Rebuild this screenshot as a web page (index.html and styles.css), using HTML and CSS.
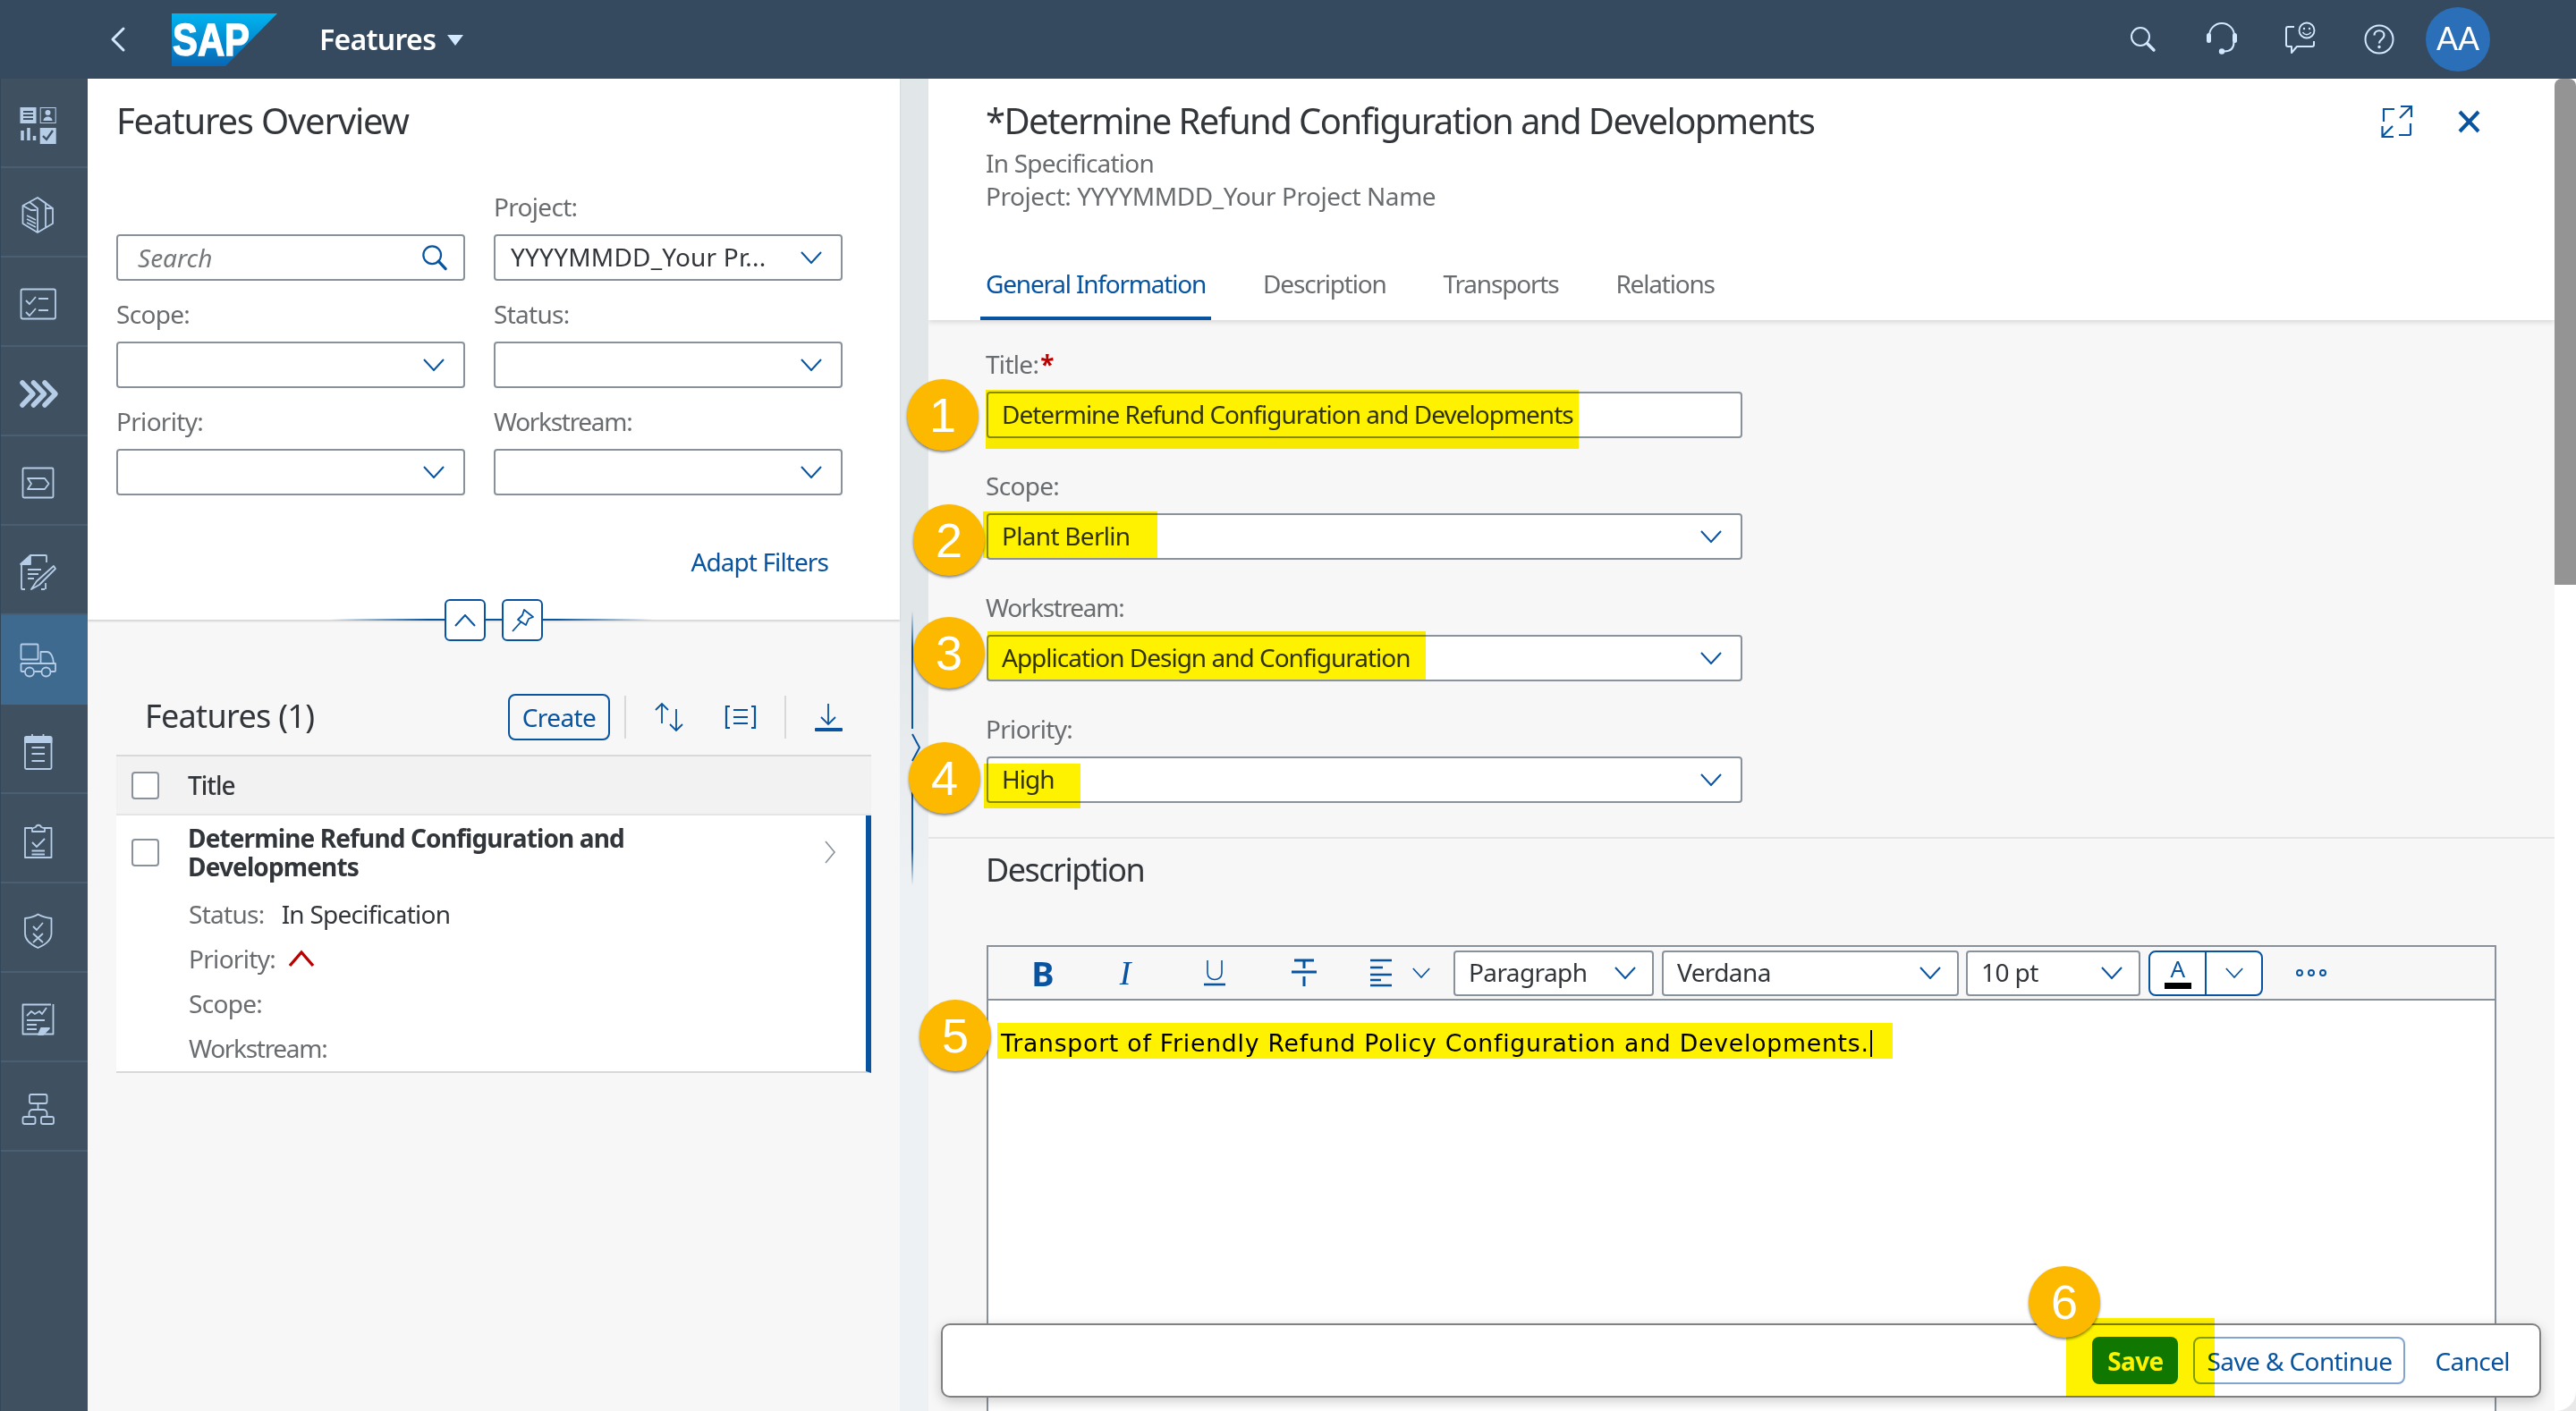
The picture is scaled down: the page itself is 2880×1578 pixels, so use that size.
FILE: index.html
```html
<!DOCTYPE html>
<html lang="en">
<head>
	<meta charset="UTF-8">
	<title>Features</title>
	<link rel="stylesheet" href="styles.css">
</head>
<body>
<svg class="defs">
	<symbol id="i-chev" viewBox="0 0 24 14"><path d="M1 1l11 12L23 1" fill="none" stroke="currentColor" stroke-width="2"/></symbol>
	<symbol id="i-search" viewBox="0 0 32 32"><circle cx="13" cy="13" r="10.5" fill="none" stroke="currentColor" stroke-width="2.4"/><path d="M20.5 20.5L29 29.5" fill="none" stroke="currentColor" stroke-width="3.4" stroke-linecap="round"/></symbol>
</svg>

<header class="shell">
	<svg class="shell-back" width="20" height="30" viewBox="0 0 20 30"><path d="M16 3L4 15l12 12" fill="none" stroke="currentColor" stroke-width="3" stroke-linecap="round" stroke-linejoin="round"/></svg>
	<svg class="shell-logo" width="118" height="59" viewBox="0 0 118 59">
		<defs><linearGradient id="sapfill" x1="0" y1="0" x2="0" y2="1"><stop offset="0" stop-color="#00b4f0"/><stop offset="1" stop-color="#0a67b4"/></linearGradient></defs>
		<polygon points="0,0 118,0 60,59 0,59" fill="url(#sapfill)"/>
		<text x="1" y="47" class="sap-text" textLength="86" lengthAdjust="spacingAndGlyphs">SAP</text>
	</svg>
	<span class="shell-title">Features</span>
	<svg class="shell-caret" width="18" height="12" viewBox="0 0 18 12"><polygon points="0,0 18,0 9,12" fill="currentColor"/></svg>
	<div class="shell-actions">
		<svg class="shell-icon" width="40" height="40" viewBox="0 0 40 40"><circle cx="17" cy="17" r="10" fill="none" stroke="currentColor" stroke-width="2"/><path d="M24.500 24.500L32 32" stroke="currentColor" stroke-width="3.400" stroke-linecap="round"/></svg>
		<svg class="shell-icon" width="40" height="40" viewBox="0 0 40 40"><path d="M6 20v-4a14 14 0 0 1 28 0v4M33.500 23c0 7-4 10.500-11 10.500" fill="none" stroke="currentColor" stroke-width="2"/><rect x="3" y="13" width="5" height="11" rx="2.500" fill="currentColor"/><rect x="32" y="13" width="5" height="11" rx="2.500" fill="currentColor"/><circle cx="20" cy="33.500" r="3.200" fill="currentColor"/></svg>
		<svg class="shell-icon" width="40" height="40" viewBox="0 0 40 40"><path d="M13 6H6a2 2 0 0 0-2 2v18a2 2 0 0 0 2 2h4v7l6-7h17a2 2 0 0 0 2-2v-4" fill="none" stroke="currentColor" stroke-width="2" stroke-linejoin="round"/><circle cx="27" cy="10" r="8.500" fill="none" stroke="currentColor" stroke-width="1.800"/><circle cx="24" cy="8" r="1.200" fill="currentColor"/><circle cx="30" cy="8" r="1.200" fill="currentColor"/><path d="M22.500 12c2 3.500 7 3.500 9 0" fill="none" stroke="currentColor" stroke-width="1.500"/></svg>
		<svg class="shell-icon" width="40" height="40" viewBox="0 0 40 40"><circle cx="20" cy="20" r="15.500" fill="none" stroke="currentColor" stroke-width="2"/><path d="M14.500 15.500c0-7 11-7 11 0 0 4.500-5.500 4.500-5.500 9" fill="none" stroke="currentColor" stroke-width="2.200"/><circle cx="20" cy="28.500" r="1.700" fill="currentColor"/></svg>
		<span class="avatar">AA</span>
	</div>
</header>

<div class="app">
	<nav class="nav">
		<div class="nav-item"><svg width="80" height="100" viewBox="0 0 80 100">
			<rect x="12.500" y="32" width="18" height="18" fill="currentColor"/><path d="M16 37h11M16 41h11M16 45h11" stroke="#3f5161" stroke-width="2"/>
			<rect x="35.200" y="32.500" width="17" height="17" fill="none" stroke="currentColor" stroke-width="1"/><circle cx="43.500" cy="38" r="3" fill="currentColor"/><path d="M38.500 47c0-6 10-6 10 0z" fill="currentColor"/>
			<path d="M15 69V58M22 69V55M28.500 69v-5" stroke="currentColor" stroke-width="3.500"/>
			<rect x="34.700" y="55" width="18" height="18" fill="currentColor"/><path d="M38 64l4 4 7-10" fill="none" stroke="#3f5161" stroke-width="2.400"/>
		</svg></div>
		<div class="nav-item"><svg width="80" height="100" viewBox="0 0 80 100">
			<g class="nav-line"><path d="M15.500 42L32 33l17 12v17l-17 10-16.500-10zM23 38l9 7v27M32 33l9 6v6l8 0M41 45v21"/><path d="M20 53l10 5M20 57l10 5M20 61l10 5" stroke-width="1.500"/><path d="M15.500 42l9 5 6 0"/></g>
		</svg></div>
		<div class="nav-item"><svg width="80" height="100" viewBox="0 0 80 100">
			<g class="nav-line"><rect x="13.500" y="35.500" width="38.500" height="33" rx="2"/><path d="M19 48l4 4 7-8M19 61l4 4 7-8M33 46h11M33 59h11"/></g>
		</svg></div>
		<div class="nav-item"><svg width="80" height="100" viewBox="0 0 80 100">
			<path class="nav-thick" d="M15 40l12 12.500L15 65M27.500 40l12 12.500-12 12.500M40 40l12 12.500L40 65"/>
		</svg></div>
		<div class="nav-item"><svg width="80" height="100" viewBox="0 0 80 100">
			<g class="nav-line"><rect x="15.500" y="35.500" width="34" height="33" rx="1.500"/><path d="M21 47h19l4.500 6-4.500 6H21l4-6z"/></g>
		</svg></div>
		<div class="nav-item"><svg width="80" height="100" viewBox="0 0 80 100">
			<g class="nav-line"><path d="M24 33h17a1 1 0 0 1 1 1v7M14 44v26a1 1 0 0 0 1 1h3M36 71h4M41 64v7"/><path d="M24 33L13 43h11z" fill="currentColor"/><path d="M21 49h15M21 54h12M21 59h7"/><path d="M31 62l19-17 2 3-18 18-9 5z"/></g>
		</svg></div>
		<div class="nav-item is-active"><svg width="80" height="100" viewBox="0 0 80 100">
			<g class="nav-line"><rect x="13.500" y="32.500" width="19" height="17" rx="1"/><path d="M35.500 54V41h7c4 0 7 5 7.500 13M13.500 54h38.500v8a1 1 0 0 1-1 1h-4M36 63H28.500M17.500 63h-3a1 1 0 0 1-1-1v-8"/><circle cx="23" cy="63.500" r="5"/><circle cx="41.500" cy="63.500" r="5"/></g>
		</svg></div>
		<div class="nav-item"><svg width="80" height="100" viewBox="0 0 80 100">
			<g class="nav-line"><rect x="18" y="36" width="29.500" height="36" rx="1.500"/><path d="M18 37h29.500v5H18z" fill="currentColor"/><path d="M26 33v7M38.500 33v7M25.500 48h14.500M25.500 55h14.500M25.500 63h14.500"/></g>
		</svg></div>
		<div class="nav-item"><svg width="80" height="100" viewBox="0 0 80 100">
			<g class="nav-line"><path d="M26 38h-8v33h29.500V38H39"/><path d="M26 42v-3.500l4-1.500c1-3 5-3 6 0l4 1.500V42z"/><path d="M26 54l5 5 9-9M25.500 63.500h14.500M25.500 67.500h14.500"/></g>
		</svg></div>
		<div class="nav-item"><svg width="80" height="100" viewBox="0 0 80 100">
			<g class="nav-line"><path d="M32.500 34.500c5 3 10 4 15 4.500v17c0 8-8 13-15 16-7-3-14.500-8-14.500-16V39c5-.5 10-1.500 14.500-4.500z"/><path d="M27 48l4 4 7-8M27 56l11 10M38 56L27 66"/></g>
		</svg></div>
		<div class="nav-item"><svg width="80" height="100" viewBox="0 0 80 100">
			<g class="nav-line"><path d="M47 35.500H15.500v33h34V35"/><path d="M20 48l5-5 4 3 5-3 3 3 5-7M20 53h20M20 58h11M20 63h11"/><path d="M33 69l3-7h9l-7 7z" fill="currentColor"/></g>
		</svg></div>
		<div class="nav-item"><svg width="80" height="100" viewBox="0 0 80 100">
			<g class="nav-line"><rect x="23" y="36" width="19.500" height="10" rx="2"/><rect x="15.500" y="61" width="14" height="8" rx="2"/><rect x="36" y="61" width="14" height="8" rx="2"/><path d="M32.500 46v7M22.500 61v-4a4 4 0 0 1 4-4h12a4 4 0 0 1 4 4v4"/></g>
		</svg></div>
	</nav>

	<section class="master">
		<div class="filters">
			<h1 class="filters-title">Features Overview</h1>
			<div class="filter-grid">
				<div class="filter">
					<div class="box box-search"><span class="placeholder">Search</span><svg class="box-icon" width="30" height="30"><use href="#i-search"/></svg></div>
				</div>
				<div class="filter">
					<label class="label">Project:</label>
					<div class="box"><span class="box-text box-text-project">YYYYMMDD_Your Pr...</span><svg class="box-icon" width="24" height="14"><use href="#i-chev"/></svg></div>
				</div>
				<div class="filter">
					<label class="label">Scope:</label>
					<div class="box"><svg class="box-icon" width="24" height="14"><use href="#i-chev"/></svg></div>
				</div>
				<div class="filter">
					<label class="label">Status:</label>
					<div class="box"><svg class="box-icon" width="24" height="14"><use href="#i-chev"/></svg></div>
				</div>
				<div class="filter">
					<label class="label">Priority:</label>
					<div class="box"><svg class="box-icon" width="24" height="14"><use href="#i-chev"/></svg></div>
				</div>
				<div class="filter">
					<label class="label label-wide">Workstream:</label>
					<div class="box"><svg class="box-icon" width="24" height="14"><use href="#i-chev"/></svg></div>
				</div>
			</div>
			<a class="adapt">Adapt Filters</a>
			<div class="collapse-line"></div>
			<div class="collapse-btns">
				<span class="collapse-btn"><svg width="24" height="14" class="flip"><use href="#i-chev"/></svg></span>
				<span class="collapse-btn"><svg width="26" height="26" viewBox="0 0 26 26"><path d="M15 1l10 8-5 2-3 7-9-6 5-5zM11 15L2 25" fill="none" stroke="currentColor" stroke-width="1.800" stroke-linejoin="round"/></svg></span>
			</div>
		</div>

		<div class="list">
			<div class="list-bar">
				<h2 class="list-title">Features (1)</h2>
				<button class="btn list-create">Create</button>
				<span class="tool-sep"></span>
				<svg class="tool" width="48" height="48" viewBox="0 0 48 48"><path d="M16 31V9M9 16l7-7 7 7M32 15v24M25 32l7 7 7-7" fill="none" stroke="currentColor" stroke-width="1.800"/></svg>
				<svg class="tool tool-gap" width="48" height="48" viewBox="0 0 48 48"><path d="M12 12H8v24h4M36 12h4v24h-4M16 16h16M16 24h16M16 31h16" fill="none" stroke="currentColor" stroke-width="2.200"/></svg>
				<span class="tool-sep tool-sep-b"></span>
				<svg class="tool" width="48" height="48" viewBox="0 0 48 48"><path d="M24 9v23M16 24l8 8 8-8" fill="none" stroke="currentColor" stroke-width="1.800"/><rect x="9" y="36" width="31" height="4" rx="1" fill="currentColor"/></svg>
			</div>
			<div class="list-head">
				<span class="check"></span>
				<span class="list-col">Title</span>
			</div>
			<div class="list-row">
				<span class="check check-row"></span>
				<div class="row-body">
					<div class="row-title">Determine Refund Configuration and<br>Developments</div>
					<div class="row-meta"><span class="label">Status:</span><span class="row-val">In Specification</span></div>
					<div class="row-meta"><span class="label">Priority:</span><svg class="row-prio" width="30" height="20" viewBox="0 0 30 20"><path d="M2 18L15 3l13 15" fill="none" stroke="#bb0000" stroke-width="3.400"/></svg></div>
					<div class="row-meta"><span class="label">Scope:</span></div>
					<div class="row-meta"><span class="label label-wide">Workstream:</span></div>
				</div>
				<svg class="row-nav" width="14" height="28" viewBox="0 0 14 28"><path d="M2 2l10 12L2 26" fill="none" stroke="#89919a" stroke-width="1.600"/></svg>
			</div>
		</div>
	</section>

	<div class="gutter">
		<span class="gutter-line"></span>
		<svg class="gutter-chev" width="12" height="32" viewBox="0 0 12 32"><path d="M2 1l8 15L2 31" fill="none" stroke="currentColor" stroke-width="2"/></svg>
		<span class="gutter-line gutter-line-b"></span>
	</div>

	<main class="detail">
		<div class="detail-head">
			<div class="detail-top">
				<div>
					<h1 class="detail-title">*Determine Refund Configuration and Developments</h1>
					<div class="detail-sub">In Specification</div>
					<div class="detail-sub detail-sub-project">Project: YYYYMMDD_Your Project Name</div>
				</div>
				<div class="detail-actions">
					<svg width="40" height="40" viewBox="0 0 40 40"><path d="M17 6H5v14M35 22v12a1 1 0 0 1-1 1H22M24 3h12v12M35.500 3.500L23 16M16 37H3.500V25M3.500 36.500L15 25" fill="none" stroke="currentColor" stroke-width="2.200"/></svg>
					<svg width="40" height="40" viewBox="0 0 40 40"><path d="M10 9l21 22M31 9L10 31" fill="none" stroke="currentColor" stroke-width="4"/></svg>
				</div>
			</div>
			<div class="tabs">
				<a class="tab is-on">General Information</a>
				<a class="tab">Description</a>
				<a class="tab">Transports</a>
				<a class="tab">Relations</a>
			</div>
		</div>

		<div class="detail-body">
			<form class="form">
				<div class="form-row">
					<label class="label">Title:<span class="req">*</span></label>
					<div class="box"><span class="box-text">Determine Refund Configuration and Developments</span></div>
				</div>
				<div class="form-row">
					<label class="label">Scope:</label>
					<div class="box"><span class="box-text box-text-short">Plant Berlin</span><svg class="box-icon" width="24" height="14"><use href="#i-chev"/></svg></div>
				</div>
				<div class="form-row">
					<label class="label label-wide">Workstream:</label>
					<div class="box"><span class="box-text">Application Design and Configuration</span><svg class="box-icon" width="24" height="14"><use href="#i-chev"/></svg></div>
				</div>
				<div class="form-row">
					<label class="label">Priority:</label>
					<div class="box"><span class="box-text">High</span><svg class="box-icon" width="24" height="14"><use href="#i-chev"/></svg></div>
				</div>
			</form>
			<div class="section-rule"></div>
			<h2 class="section-title">Description</h2>
			<div class="editor">
				<div class="editor-bar">
					<span class="tb tb-bold">B</span>
					<span class="tb tb-italic">I</span>
					<span class="tb tb-under"><svg width="26" height="30" viewBox="0 0 26 30"><path d="M5 1v14c0 10 16 10 16 0V1" fill="none" stroke="currentColor" stroke-width="1.600"/><path d="M1 28h24" stroke="currentColor" stroke-width="2.600"/></svg></span>
					<span class="tb tb-strike"><svg width="30" height="32" viewBox="0 0 30 32"><path d="M4 2h22M15 2v9M1 15h28M15 20v11" fill="none" stroke="currentColor" stroke-width="3"/></svg></span>
					<span class="tb tb-align"><svg width="26" height="32" viewBox="0 0 26 32"><path d="M1 2h24M1 10h14M1 18h24M1 24h12M1 30h24" fill="none" stroke="currentColor" stroke-width="2.600"/></svg></span>
					<svg class="tb-caret" width="20" height="12"><use href="#i-chev"/></svg>
					<div class="tb-select tb-para"><span class="box-text-tb">Paragraph</span><svg width="24" height="14"><use href="#i-chev"/></svg></div>
					<div class="tb-select tb-font"><span class="box-text-tb">Verdana</span><svg width="24" height="14"><use href="#i-chev"/></svg></div>
					<div class="tb-select tb-size"><span class="box-text-tb">10 pt</span><svg width="24" height="14"><use href="#i-chev"/></svg></div>
					<div class="tb-color">
						<span class="tb-color-a"><span class="tb-a">A</span><span class="tb-a-bar"></span></span>
						<span class="tb-color-b"><svg width="20" height="12"><use href="#i-chev"/></svg></span>
					</div>
					<svg class="tb-more" width="40" height="12" viewBox="0 0 40 12"><circle cx="7" cy="6" r="3" fill="none" stroke="currentColor" stroke-width="2"/><circle cx="20" cy="6" r="3" fill="none" stroke="currentColor" stroke-width="2"/><circle cx="33" cy="6" r="3" fill="none" stroke="currentColor" stroke-width="2"/></svg>
				</div>
				<div class="editor-text">Transport of Friendly Refund Policy Configuration and Developments.<span class="caret"></span></div>
			</div>
		</div>

		<div class="footer">
			<button class="btn btn-save">Save</button>
			<button class="btn btn-next">Save &amp; Continue</button>
			<a class="footer-cancel">Cancel</a>
		</div>
	</main>

	<div class="scroll"><div class="scroll-thumb"></div></div>
</div>

<!-- yellow marks and numbers put on top of the screenshot -->
<div class="mark mark-1"></div>
<div class="mark mark-2"></div>
<div class="mark mark-3"></div>
<div class="mark mark-4"></div>
<div class="mark mark-5"></div>
<div class="mark mark-6"></div>
<div class="step step-1">1</div>
<div class="step step-2">2</div>
<div class="step step-3">3</div>
<div class="step step-4">4</div>
<div class="step step-5">5</div>
<div class="step step-6">6</div>
</body>
</html>
```

FILE: styles.css
```css
* { box-sizing: border-box; }
body,h1,h2,form,button { margin:0; padding:0; }
html, body { height: 1578px; overflow: hidden; }
body { position: relative; background: #e9e9e9; color: #32363a; font-family: "Noto Sans", "Open Sans", sans-serif; font-size: 28px; line-height: 36px; letter-spacing: -.6px; }
h1, h2 { font-weight: normal; }
button { font: inherit; letter-spacing: inherit; }
.defs { position: absolute; width: 0; height: 0; }

/* shell bar */
.shell { display: flex; align-items: center; height: 88px; background: #354a5f; color: #d1e8ff; }
.shell-back { margin-left: 122px; }
.shell-logo { margin-left: 50px; }
.sap-text { font-family: "Liberation Sans", sans-serif; font-weight: bold; font-size: 50px; fill: #fff; stroke: #fff; stroke-width: 1.500px; letter-spacing: 0; }
.shell-title { margin-left: 47px; color: #fff; font-weight: 600; font-size: 32px; letter-spacing: -.7px; }
.shell-caret { margin-left: 13px; margin-top: 1px; }
.shell-actions { display: flex; align-items: center; margin-left: auto; margin-right: 96px; }
.shell-icon { margin-right: 48px; }
.avatar { width: 72px; height: 72px; margin-left: -16px; border-radius: 50%; background: #2a6fb8; color: #fff; font-family: "Liberation Sans", sans-serif; font-size: 36px; line-height: 72px; text-align: center; letter-spacing: 0; }

.app { display: flex; height: 1490px; }

/* side navigation */
.nav { flex: none; width: 98px; background: #3f5161; color: #b5cde6; border-left: 1px solid #33475a; }
.nav-item { display: flex; justify-content: center; height: 100px; border-bottom: 2px solid #4a6072; }
.nav-item.is-active { background: #3f6a8f; border-bottom-color: #3f6a8f; }
.nav-line { fill: none; stroke: currentColor; stroke-width: 1.800; stroke-linejoin: round; }
.nav-thick { fill: none; stroke: currentColor; stroke-width: 5.500; stroke-linecap: round; stroke-linejoin: round; }

/* left column */
.master { flex: none; width: 908px; background: #f7f7f7; }
.filters { position: relative; height: 605px; padding: 22px 32px 0; background: #fff; box-shadow: 0 2px 2px rgba(0,0,0,.14); }
.filters-title { font-size: 40px; line-height: 50px; margin-bottom: 53px; letter-spacing: -1.2px; }
.filter-grid { display: grid; grid-template-columns: 390px 390px; column-gap: 32px; row-gap: 19px; }
.filter { align-self: end; }
.label { display: block; color: #6a6d70; letter-spacing: -.7px; }
.label-wide { letter-spacing: -1.3px; }
.filter .label { margin-bottom: 13px; }
.box { position: relative; display: flex; align-items: center; height: 52px; padding-left: 16px; background: #fff; border: 2px solid #89919a; border-radius: 4px; }
.box-search { padding-left: 22px; }
.box-text { margin-bottom: 2px; letter-spacing: -1px; }
.box-text-short { letter-spacing: -.7px; }
.box-text-project { padding-left: 1px; letter-spacing: .2px; }
.placeholder { color: #74777a; font-style: italic; letter-spacing: 0; }
.box-icon { margin-left: auto; margin-right: 21px; color: #0854a0; flex: none; }
.box-search .box-icon { margin-right: 17px; }
.adapt { display: block; margin-top: 56px; margin-right: 48px; color: #0854a0; text-align: right; letter-spacing: -.9px; }
.collapse-line { position: absolute; left: 272px; bottom: -1px; width: 360px; height: 2px; background: linear-gradient(90deg, rgba(8,84,160,0), #0854a0 30%, #0854a0 70%, rgba(8,84,160,0)); }
.collapse-btns { position: absolute; left: 399px; bottom: -24px; display: flex; gap: 18px; }
.collapse-btn { display: flex; align-items: center; justify-content: center; width: 46px; height: 47px; background: #fff; border: 2px solid #0854a0; border-radius: 6px; color: #0854a0; }
.flip { transform: rotate(180deg); }

/* list */
.list { padding: 83px 32px 0; }
.list-bar { display: flex; align-items: center; height: 52px; margin-bottom: 16px; padding-left: 32px; }
.list-title { margin-top: -3px; font-size: 36px; line-height: 52px; letter-spacing: -.7px; }
.btn { height: 52px; border-radius: 8px; }
.list-create { width: 114px; margin-left: auto; background: transparent; border: 2px solid #0854a0; color: #0854a0; }
.tool-sep { width: 2px; height: 48px; margin: 0 24px 0 16px; background: #d9d9d9; }
.tool-sep-b { margin: 0 23px 0 25px; }
.tool { flex: none; color: #0854a0; }
.tool-gap { margin-left: 32px; }
.list-bar .tool:last-child { margin-right: 24px; }
.list-head { display: flex; align-items: center; height: 68px; padding-left: 17px; background: #f2f2f2; border-top: 2px solid #d9d9d9; border-bottom: 2px solid #e5e5e5; }
.check { flex: none; width: 31px; height: 31px; background: #fff; border: 2px solid #89919a; border-radius: 4px; }
.list-col { margin-left: 32px; font-weight: 500; letter-spacing: -1px; }
.list-row { display: flex; align-items: flex-start; height: 288px; padding: 0 0 0 17px; background: #fff; border-right: 6px solid #0854a0; border-bottom: 2px solid #d9d9d9; }
.check-row { margin-top: 26px; }
.row-body { margin-left: 32px; padding-top: 9px; }
.row-title { font-weight: 700; line-height: 32px; margin-bottom: 12px; letter-spacing: -.87px; }
.row-meta { display: flex; align-items: center; height: 50px; margin-left: 1px; }
.row-val { margin-left: 19px; letter-spacing: -.75px; }
.row-prio { margin-left: 14px; }
.row-nav { margin-left: auto; margin-right: 33px; margin-top: 27px; }

/* drag bar between columns */
.gutter { flex: none; display: flex; flex-direction: column; align-items: flex-start; width: 32px; padding: 595px 0 0 13px; background: linear-gradient(#e1e6e8 40%, #eef1f3 60%); color: #0854a0; }
.gutter-line { width: 2px; height: 132px; background: linear-gradient(rgba(8,84,160,0), #0854a0 30%); }
.gutter-line-b { height: 133px; background: linear-gradient(#0854a0 70%, rgba(8,84,160,0)); }
.gutter-chev { margin: 5px 0 5px -1px; }

/* right column */
.detail { position: relative; flex: none; width: 1818px; display: flex; flex-direction: column; overflow: hidden; background: #f7f7f7; }
.detail-head { flex: none; display: flex; flex-direction: column; height: 270px; padding: 22px 0 0 64px; background: #fff; box-shadow: 0 2px 6px rgba(0,0,0,.14); position: relative; }
.detail-top { display: flex; justify-content: space-between; }
.detail-title { font-size: 40px; line-height: 50px; margin-bottom: 4px; letter-spacing: -1.57px; }
.detail-sub { color: #6a6d70; line-height: 37px; letter-spacing: -.8px; }
.detail-sub-project { letter-spacing: -.45px; }
.detail-actions { display: flex; gap: 40px; margin: 6px 76px 0 0; color: #0854a0; }
.tabs { display: flex; gap: 52px; margin-top: auto; margin-left: -6px; letter-spacing: -1.200px; }
.tab { padding: 0 6px 19px; color: #6a6d70; border-bottom: 4px solid transparent; }
.tab.is-on { color: #0854a0; border-bottom-color: #0854a0; }
.detail-body { flex: 1; display: flex; flex-direction: column; min-height: 0; padding-top: 31px; }
.form { padding-left: 64px; }
.form-row { width: 846px; margin-bottom: 35px; }
.form-row:last-child { margin-bottom: 0; }
.form-row .label { margin-bottom: 13px; }
.form-row .box { margin-left: 1px; padding-left: 15px; }
.req { color: #bb0000; font-weight: bold; margin-left: 2px; }
.section-rule { flex: none; height: 2px; margin-top: 38px; background: #e5e5e5; }
.section-title { flex: none; margin: 10px 0 59px 64px; font-size: 36px; line-height: 50px; letter-spacing: -1.5px; }

/* editor */
.editor { flex: 1; width: 1688px; margin-left: 65px; background: #fff; border: 2px solid #89919a; border-bottom: 0; }
.editor-bar { display: flex; align-items: center; height: 60px; background: #f7f7f7; border-bottom: 2px solid #89919a; color: #0854a0; }
.tb { display: flex; align-items: center; justify-content: center; flex: none; width: 48px; height: 48px; }
.tb-bold { margin-left: 37px; font: bold 38px/48px "Noto Sans", sans-serif; letter-spacing: 0; }
.tb-italic { margin-left: 44px; font: italic 38px/48px "Liberation Serif", serif; letter-spacing: 0; }
.tb-under { margin-left: 52px; }
.tb-strike { margin-left: 52px; }
.tb-align { margin-left: 38px; }
.tb-caret { flex: none; margin-left: 11px; }
.tb-select { flex: none; display: flex; align-items: center; justify-content: space-between; height: 51px; padding: 0 18px 0 15px; background: #fff; border: 2px solid #89919a; border-radius: 4px; color: #0854a0; }
.box-text-tb { margin-bottom: 2px; color: #32363a; }
.tb-para { width: 224px; margin-left: 26px; }
.tb-font { width: 332px; margin-left: 9px; }
.tb-size { width: 195px; margin-left: 8px; }
.tb-color { flex: none; display: flex; width: 128px; height: 51px; margin-left: 9px; background: #fff; border: 2px solid #0854a0; border-radius: 8px; }
.tb-color-a { display: flex; flex-direction: column; align-items: center; width: 63px; border-right: 2px solid #0854a0; }
.tb-a { font-size: 26px; line-height: 32px; margin-top: 2px; }
.tb-a-bar { width: 30px; height: 7px; background: #000; }
.tb-color-b { flex: 1; display: flex; align-items: center; justify-content: center; }
.tb-more { flex: none; margin-left: 34px; }
.editor-text { padding: 28px 0 0 14px; color: #000; font-family: "DejaVu Sans", Verdana, sans-serif; font-size: 26.670px; line-height: 40px; letter-spacing: .78px; }
.caret { display: inline-block; width: 2px; height: 30px; margin-left: 1px; background: #000; vertical-align: -6px; }

/* bottom bar */
.footer { position: absolute; left: 14px; right: 15px; top: 1392px; display: flex; align-items: center; justify-content: flex-end; height: 83px; padding-right: 33px; background: #fff; border: 2px solid #808080; border-radius: 10px; box-shadow: 0 4px 14px rgba(0,0,0,.2); }
.btn-save { width: 96px; height: 53px; background: #107e3e; border: 0; color: #fff; font-weight: 700; }
.btn-next { width: 237px; height: 53px; margin-left: 17px; background: #fff; border: 2px solid #7fa5d0; color: #0854a0; }
.footer-cancel { margin-left: 33px; color: #0854a0; }

/* scrollbar */
.scroll { flex: 1; background: #fff; border-bottom-right-radius: 22px; }
.scroll-thumb { height: 566px; background: #949494; border-radius: 8px 8px 0 0; }

/* annotations */
.mark { position: absolute; background: #fff200; mix-blend-mode: multiply; }
.mark-1 { left: 1102px; top: 436px; width: 663px; height: 66px; }
.mark-2 { left: 1099px; top: 572px; width: 195px; height: 52px; }
.mark-3 { left: 1104px; top: 706px; width: 490px; height: 54px; }
.mark-4 { left: 1100px; top: 854px; width: 108px; height: 50px; }
.mark-5 { left: 1115px; top: 1144px; width: 1001px; height: 40px; }
.mark-6 { left: 2310px; top: 1474px; width: 166px; height: 88px; }
.step { position: absolute; width: 80px; height: 80px; border-radius: 50%; background: #fdb900; box-shadow: 0 2px 3px rgba(0,0,0,.45); color: #fff; font-family: "Liberation Sans", sans-serif; font-size: 54px; line-height: 80px; text-align: center; letter-spacing: 0; }
.step-1 { left: 1014px; top: 424px; }
.step-2 { left: 1021px; top: 564px; }
.step-3 { left: 1021px; top: 690px; }
.step-4 { left: 1016px; top: 830px; }
.step-5 { left: 1028px; top: 1118px; }
.step-6 { left: 2268px; top: 1416px; }
```
